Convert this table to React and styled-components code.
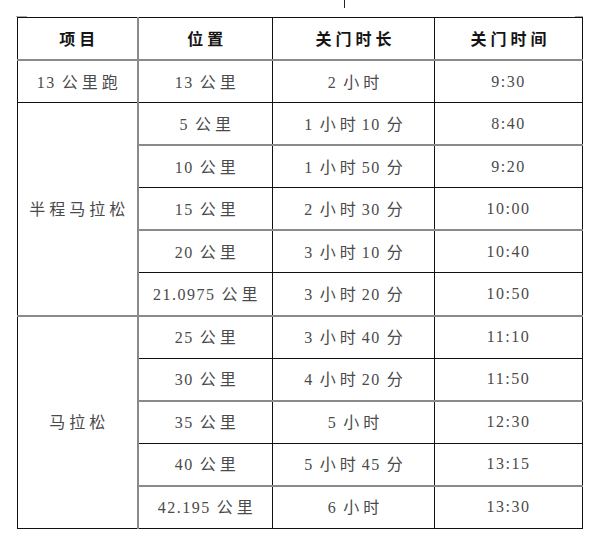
import React from 'react';
import styled, {createGlobalStyle} from 'styled-components';

const GlobalStyle = createGlobalStyle`
    html, body {
        margin: 0;
        padding: 0;
        background: #fff;
    }
`;

const Page = styled.div`
    position: relative;
    width: 613px;
    height: 542px;
    box-sizing: border-box;
    padding: 17px 0 0 17px;
`;

const Tick = styled.span`
    position: absolute;
    left: 344px;
    top: 0;
    width: 1px;
    height: 8px;
    background: #222;
`;

const CornerMark = styled.span`
    position: absolute;
    top: 16px;
    left: ${p => p.left}px;
    width: ${p => p.width}px;
    height: 1px;
    background: #aaa;
`;

const Table = styled.table`
    border-collapse: collapse;
    table-layout: fixed;
    width: 565px;
    font-size: 16px;
    line-height: 20px;
    color: #4a4a4a;
`;

const HeadCell = styled.th`
    height: 41px;
    padding: 0;
    text-align: center;
    vertical-align: middle;
    font-weight: 700;
    color: #151515;
    border: 1px solid #111;
    border-bottom: 2px solid #8a8a8a;
    ${p => p.first && 'border-right: 2px solid #8a8a8a;'}
`;

const Cell = styled.td`
    height: 41.1px;
    padding: 0;
    text-align: center;
    vertical-align: middle;
    white-space: nowrap;
    border: 1px solid #111;
    border-bottom: ${p => p.soft ? '2px solid #8a8a8a' : '1px solid #111'};
    ${p => p.first && 'border-right: 2px solid #8a8a8a;'}
`;

const Han = styled.span`
    font-family: "Noto Sans CJK SC", sans-serif;
    letter-spacing: 4px;
    &:last-child {
        margin-right: -4px;
    }
`;

const Latin = styled.span`
    font-family: "Liberation Serif", serif;
    letter-spacing: 1.5px;
    margin-left: ${p => p.after ? 2 : 0}px;
    padding-right: ${p => p.gap ? 6 : 0}px;
`;

// split text so that Chinese and Latin parts get their own spacing
const Txt = ({children}) => {
    const parts = (children.match(/[\u4e00-\u9fff]+|[^\u4e00-\u9fff]+/g) || [])
        .map(s => s.trim())
        .filter(Boolean);
    return parts.map((part, i) =>
        /[\u4e00-\u9fff]/.test(part)
            ? <Han key={i}>{part}</Han>
            : <Latin key={i} after={i > 0} gap={i < parts.length - 1}>{part}</Latin>
    );
};

const columns = [
    {title: '项目', width: 120},
    {title: '位置', width: 135},
    {title: '关门时长', width: 162},
    {title: '关门时间', width: 148}
];

const rows = [
    {group: '13 公里跑', span: 1, pos: '13 公里', dur: '2 小时', time: '9:30'},
    {group: '半程马拉松', span: 5, pos: '5 公里', dur: '1 小时 10 分', time: '8:40'},
    {pos: '10 公里', dur: '1 小时 50 分', time: '9:20'},
    {pos: '15 公里', dur: '2 小时 30 分', time: '10:00'},
    {pos: '20 公里', dur: '3 小时 10 分', time: '10:40'},
    {pos: '21.0975 公里', dur: '3 小时 20 分', time: '10:50'},
    {group: '马拉松', span: 5, pos: '25 公里', dur: '3 小时 40 分', time: '11:10'},
    {pos: '30 公里', dur: '4 小时 20 分', time: '11:50'},
    {pos: '35 公里', dur: '5 小时', time: '12:30'},
    {pos: '40 公里', dur: '5 小时 45 分', time: '13:15'},
    {pos: '42.195 公里', dur: '6 小时', time: '13:30'}
];

export default function App() {
    return (
        <>
            <GlobalStyle />
            <Page>
                <Tick />
                <CornerMark left={16} width={11} />
                <CornerMark left={575} width={8} />
                <Table>
                    <colgroup>
                        {columns.map(c => <col key={c.title} style={{width: c.width}} />)}
                    </colgroup>
                    <thead>
                        <tr>
                            {columns.map((c, i) => (
                                <HeadCell key={c.title} first={i === 0}>
                                    <Txt>{c.title}</Txt>
                                </HeadCell>
                            ))}
                        </tr>
                    </thead>
                    <tbody>
                        {rows.map((row, i) => {
                            const soft = i % 2 === 1;
                            const groupSoft = (i + row.span - 1) % 2 === 1;
                            return (
                                <tr key={i}>
                                    {row.group && (
                                        <Cell rowSpan={row.span} first soft={groupSoft}>
                                            <Txt>{row.group}</Txt>
                                        </Cell>
                                    )}
                                    <Cell soft={soft}><Txt>{row.pos}</Txt></Cell>
                                    <Cell soft={soft}><Txt>{row.dur}</Txt></Cell>
                                    <Cell soft={soft}><Txt>{row.time}</Txt></Cell>
                                </tr>
                            );
                        })}
                    </tbody>
                </Table>
            </Page>
        </>
    );
}
